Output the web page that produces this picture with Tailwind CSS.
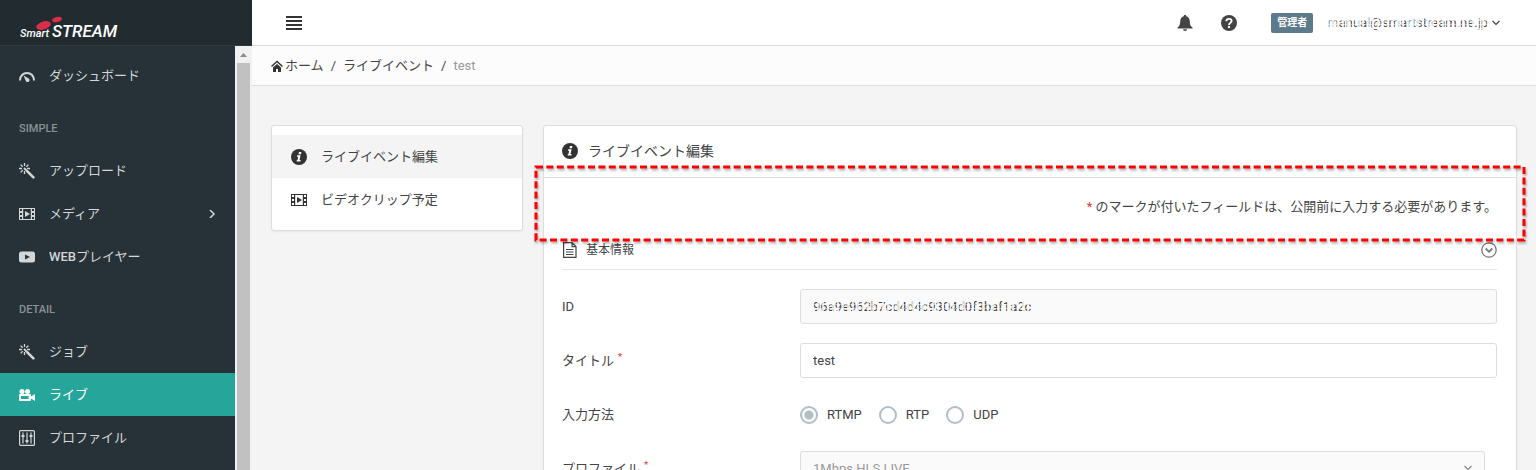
<!DOCTYPE html>
<html lang="ja">

<head>
  <meta charset="UTF-8">
  <meta name="viewport" content="width=device-width, initial-scale=1.0">
  <title>SmartSTREAM - ライブイベント編集</title>
  <script src="https://cdn.jsdelivr.net/npm/@tailwindcss/browser@4"></script>
</head>

<body class="flex h-screen flex-col overflow-hidden bg-[#f4f4f4] font-['Roboto','Noto_Sans_CJK_JP',sans-serif] text-[13px] leading-5 text-[#444]">

  <!-- Shared icons -->
  <svg class="hidden">
    <symbol id="i-wand" viewBox="0 0 16 16">
      <path fill="none" stroke="currentColor" stroke-width="1.3" d="M5.5 0v3M5.5 8v3M0 5.5h3M8 5.5h3M1.6 1.6l2.1 2.1M9.4 1.6L7.3 3.7M1.6 9.4l2.1-2.1" />
      <path fill="none" stroke="currentColor" stroke-width="2.6" stroke-linecap="round" d="M8.6 8.6l5.8 5.8" />
      <path fill="none" stroke="currentColor" stroke-width="1.8" d="M5 5l4 4" />
    </symbol>
    <symbol id="i-film" viewBox="0 0 16 16">
      <path fill="currentColor" fill-rule="evenodd" d="M0 2h16v12H0zM1 3v2h2V3zM1 7v2h2V7zM1 11v2h2v-2zM13 3v2h2V3zM13 7v2h2V7zM13 11v2h2v-2zM4.200 3v10h7.600V3zM6 5l5 3-5 3z" />
    </symbol>
    <symbol id="i-info" viewBox="0 0 16 16">
      <circle cx="8" cy="8" r="8" fill="currentColor" />
      <path fill="#fff" d="M8 3h2.400l-.5 2.200H7.500zM6.200 6.300h3.400L8.500 11h1.200l-.3 1.500H5.600l.3-1.500h.6l.7-3.200H5.900z" />
    </symbol>
  </svg>

  <header class="flex h-[46px] shrink-0">
    <div class="w-[252px] shrink-0 border-b border-[#2f3b41] bg-[#222c30]">
      <a href="#" aria-label="SmartSTREAM">
        <svg class="h-[45px] w-[130px]" viewBox="0 0 130 45">
          <ellipse cx="43.500" cy="25.500" rx="7.500" ry="4" fill="#dc2d4a" transform="rotate(-18 43.500 25.500)" />
          <ellipse cx="57" cy="19.500" rx="5" ry="2.500" fill="#dc2d4a" transform="rotate(-14 57 19.500)" />
          <text x="20" y="37" fill="#fff" font-family="Roboto" font-size="11" font-weight="500" font-style="italic">Smart</text>
          <text x="52" y="37" fill="#fff" font-family="Roboto" font-size="17" font-weight="500" font-style="italic">STREAM</text>
        </svg>
      </a>
    </div>
    <div class="flex flex-1 items-center border-b border-[#ddd] bg-white pr-9 pl-[34px]">
      <button type="button" aria-label="メニュー" class="text-[#333]">
        <svg class="size-4" viewBox="0 0 16 16">
          <path stroke="currentColor" stroke-width="2" d="M0 2h16M0 6h16M0 10h16M0 14h16" />
        </svg>
      </button>
      <button type="button" aria-label="通知" class="ml-auto text-[#444]">
        <svg class="size-4" viewBox="0 0 16 16" fill="currentColor">
          <path d="M8 0c.8 0 1.300.5 1.300 1.300C11.700 2 12.800 4 12.800 6.500c0 3.500.9 4.800 2.700 6V13.500H.5V12.500c1.800-1.200 2.700-2.500 2.700-6C3.200 4 4.300 2 6.700 1.300 6.700.5 7.200 0 8 0zM6 14.300h4a2 1.700 0 0 1-4 0z" />
        </svg>
      </button>
      <button type="button" aria-label="ヘルプ" class="ml-7 text-[#444]">
        <svg class="size-4" viewBox="0 0 16 16">
          <circle cx="8" cy="8" r="8" fill="currentColor" />
          <path fill="none" stroke="#fff" stroke-width="1.900" d="M5.400 6.300C5.400 4.700 6.500 3.900 8 3.900s2.600.8 2.600 2.200C10.600 7.800 8 7.700 8 10" />
          <path fill="#fff" d="M7 11h2v2H7z" />
        </svg>
      </button>
      <span class="ml-[34px] rounded-[2px] bg-[#5c7a89] px-[6px] py-[2px] text-[10px] leading-4 font-bold text-white">管理者</span>
      <button type="button" class="ml-[14px] flex items-center gap-1">
        <span class="relative text-[#555]">
          manual@smartstream.ne.jp
          <span class="absolute inset-0 bg-[repeating-linear-gradient(90deg,#ffffffc0_0_2px,transparent_2px_5px),repeating-linear-gradient(0deg,#ffffff80_0_1px,transparent_1px_4px)]"></span>
        </span>
        <svg class="size-2" viewBox="0 0 8 8">
          <path fill="none" stroke="#444" stroke-width="1.200" d="M.5 2L4 5.500 7.500 2" />
        </svg>
      </button>
    </div>
  </header>

  <div class="flex min-h-0 flex-1">
    <!-- Sidebar -->
    <aside class="flex w-[252px] shrink-0 bg-[#263238]">
      <nav class="flex-1 overflow-hidden pt-2 text-[#d4d7d8]">
        <a href="#" class="flex h-[43px] items-center gap-[14px] px-[19px]">
          <svg class="size-4" viewBox="0 0 16 16">
            <path fill="none" stroke="currentColor" stroke-width="2" d="M1 12.500C1 8 4 5 8 5s7 3 7 7.500" />
            <path fill="currentColor" d="M4.500 7.500l4.700 2.700a2 2 0 1 1-2.600 2.400z" />
          </svg>
          ダッシュボード
        </a>
        <div class="h-[52px] px-[19px] pt-[25px] text-[11px] leading-[14px] font-medium text-[#899297]">SIMPLE</div>
        <a href="#" class="flex h-[43px] items-center gap-[14px] px-[19px]">
          <svg class="size-4"><use href="#i-wand" /></svg>
          アップロード
        </a>
        <a href="#" class="flex h-[43px] items-center gap-[14px] px-[19px]">
          <svg class="size-4"><use href="#i-film" /></svg>
          メディア
          <svg class="ml-auto size-2" viewBox="0 0 8 8">
            <path fill="none" stroke="currentColor" stroke-width="1.500" d="M2 0l4 4-4 4" />
          </svg>
        </a>
        <a href="#" class="flex h-[43px] items-center gap-[14px] px-[19px] font-medium">
          <svg class="size-4" viewBox="0 0 16 16">
            <path fill="currentColor" fill-rule="evenodd" d="M2.500 2.500h11Q16 2.500 16 5v6q0 2.500-2.500 2.500h-11Q0 13.500 0 11V5Q0 2.500 2.500 2.500zM6 5.500v5l5-2.500z" />
          </svg>
          <span>WEB<span class="font-normal">プレイヤー</span></span>
        </a>
        <div class="h-[52px] px-[19px] pt-[25px] text-[11px] leading-[14px] font-medium text-[#899297]">DETAIL</div>
        <a href="#" class="flex h-[43px] items-center gap-[14px] px-[19px]">
          <svg class="size-4"><use href="#i-wand" /></svg>
          ジョブ
        </a>
        <a href="#" class="flex h-[43px] items-center gap-[14px] bg-[#26a69a] px-[19px] text-white">
          <svg class="size-4" viewBox="0 0 16 16" fill="currentColor">
            <circle cx="3" cy="4.500" r="2.500" />
            <circle cx="8.500" cy="4.500" r="2.500" />
            <path fill-rule="evenodd" d="M1 7h10q1 0 1 1v1.500L16 7v7l-4-2.500V13q0 1-1 1H1q-1 0-1-1V8q0-1 1-1zM2 9v3h7.500V9z" />
          </svg>
          ライブ
        </a>
        <a href="#" class="flex h-[43px] items-center gap-[14px] px-[19px]">
          <svg class="size-4" viewBox="0 0 16 16">
            <rect x=".6" y=".6" width="14.800" height="14.800" rx="1" fill="none" stroke="currentColor" stroke-width="1.200" />
            <path stroke="currentColor" stroke-width="1.200" d="M4 2.500v11M8 2.500v11M12 2.500v11" />
            <path stroke="currentColor" stroke-width="2" d="M2.500 6h3M6.500 11h3M10.500 6h3" />
          </svg>
          プロファイル
        </a>
      </nav>
      <!-- Sidebar scroll track -->
      <div class="flex w-[17px] flex-col items-center bg-[#f1f1f1]">
        <svg class="h-[17px] w-[17px] shrink-0" viewBox="0 0 17 17">
          <path fill="#8b8b8b" d="M8.500 7l3.500 4H5z" />
        </svg>
        <div class="w-[13px] flex-1 bg-[#c1c1c1]"></div>
      </div>
    </aside>

    <main class="min-w-0 flex-1">
      <nav class="flex h-10 items-center border-b border-[#ddd] bg-[#fcfcfc] px-[19px]">
        <a href="#" class="flex items-center gap-[2px]">
          <svg class="size-3 text-[#333]" viewBox="0 0 12 12">
            <path fill="none" stroke="currentColor" stroke-width="1.500" d="M.5 6.500L6 1.500l5.500 5" />
            <path fill="currentColor" d="M6 4l4 3.500V12H7V9H5v3H2V7.500z" />
          </svg>
          ホーム
        </a>
        <span class="mx-[7px]">/</span>
        <a href="#">ライブイベント</a>
        <span class="mx-[7px]">/</span>
        <span class="text-[#999]">test</span>
      </nav>

      <div class="flex items-start gap-5 pt-[39px] pr-[19px] pl-[19px]">
        <div class="w-[252px] shrink-0 rounded-[3px] border border-[#ddd] bg-white py-[9px] shadow-xs">
          <a href="#" class="flex h-[43px] items-center gap-[14px] bg-[#f4f4f4] px-[19px]">
            <svg class="size-4 text-[#333]"><use href="#i-info" /></svg>
            ライブイベント編集
          </a>
          <a href="#" class="flex h-[43px] items-center gap-[14px] px-[19px]">
            <svg class="size-4 text-[#333]"><use href="#i-film" /></svg>
            ビデオクリップ予定
          </a>
        </div>

        <section class="relative flex-1 rounded-[3px] border border-[#ddd] bg-white shadow-xs">
          <h1 class="flex h-[52px] items-center gap-[10px] border-b border-[#ddd] px-[18px] pb-[2px] text-sm">
            <svg class="size-4 text-[#333]"><use href="#i-info" /></svg>
            ライブイベント編集
          </h1>

          <form class="pr-[19px] pb-5 pl-[18px]">
            <p class="pt-[19px] text-right"><span class="text-[#e53935]">*</span> のマークが付いたフィールドは、公開前に入力する必要があります。</p>

            <div class="mt-[14px] mb-[19px] flex h-[39px] items-center border-b border-[#e5e5e5] text-xs">
              <svg class="mr-2 size-4" viewBox="0 0 16 16">
                <path fill="none" stroke="currentColor" stroke-width="1.200" d="M1.600.6h8.400l4 4v10.800H1.600zM10 .6v4h4M4 7.500h7.500M4 10h7.500M4 12.500h7.500" />
              </svg>
              <h2>基本情報</h2>
              <button type="button" aria-label="折りたたむ" class="ml-auto text-[#777]">
                <svg class="size-4" viewBox="0 0 16 16">
                  <circle cx="8" cy="8" r="7.200" fill="none" stroke="currentColor" stroke-width="1.300" />
                  <path fill="none" stroke="currentColor" stroke-width="1.800" d="M4.700 6.500L8 9.800l3.300-3.300" />
                </svg>
              </button>
            </div>

            <div class="grid grid-cols-[238px_1fr] items-center gap-y-[19px]">
              <label for="event-id">ID</label>
              <div class="relative">
                <input id="event-id" type="text" readonly value="96a9e962b7cd4d4c9304d0f3baf1a2c" class="block h-[35px] w-full rounded-[3px] border border-[#ddd] bg-[#fafafa] px-3 outline-none">
                <span class="pointer-events-none absolute top-2 left-3 h-5 w-[230px] bg-[repeating-linear-gradient(90deg,#fafafac0_0_2px,transparent_2px_5px),repeating-linear-gradient(0deg,#fafafa80_0_1px,transparent_1px_4px)]"></span>
              </div>

              <label for="event-title">タイトル<sup class="ml-1 text-[#e53935]">*</sup></label>
              <input id="event-title" type="text" value="test" class="h-[35px] w-full rounded-[3px] border border-[#ddd] bg-white px-3 outline-none">

              <span id="input-method">入力方法</span>
              <div role="radiogroup" aria-labelledby="input-method" class="flex h-[35px] items-center gap-[17px]">
                <label class="flex items-center gap-[9px]">
                  <input type="radio" name="method" checked class="size-[18px] appearance-none rounded-full border-2 border-[#b0bec5] bg-white checked:bg-[radial-gradient(circle,#b0bec5_4px,transparent_5px)]">
                  RTMP
                </label>
                <label class="flex items-center gap-[9px]">
                  <input type="radio" name="method" class="size-[18px] appearance-none rounded-full border-2 border-[#b0bec5] bg-white">
                  RTP
                </label>
                <label class="flex items-center gap-[9px]">
                  <input type="radio" name="method" class="size-[18px] appearance-none rounded-full border-2 border-[#b0bec5] bg-white">
                  UDP
                </label>
              </div>

              <label for="event-profile">プロファイル<sup class="ml-1 text-[#e53935]">*</sup></label>
              <div class="relative mr-3">
                <select id="event-profile" class="block h-[35px] w-full appearance-none rounded-[3px] border border-[#ddd] bg-[#fafafa] px-3 text-[#999]">
                  <option>1Mbps HLS LIVE</option>
                </select>
                <svg class="pointer-events-none absolute top-[13px] right-[13px] size-2" viewBox="0 0 8 8">
                  <path fill="none" stroke="#888" stroke-width="1.200" d="M.5 2L4 5.500 7.500 2" />
                </svg>
              </div>
            </div>
          </form>

          <!-- Callout around the required-field note -->
          <div class="pointer-events-none absolute -inset-x-2 top-[41px] h-[73px]">
            <svg class="size-full overflow-visible drop-shadow-[1px_2px_1px_#00000050]">
              <rect width="100%" height="100%" fill="none" stroke="#f00" stroke-width="3" stroke-dasharray="7 3.400" />
            </svg>
          </div>
        </section>
      </div>
    </main>
  </div>

</body>

</html>
